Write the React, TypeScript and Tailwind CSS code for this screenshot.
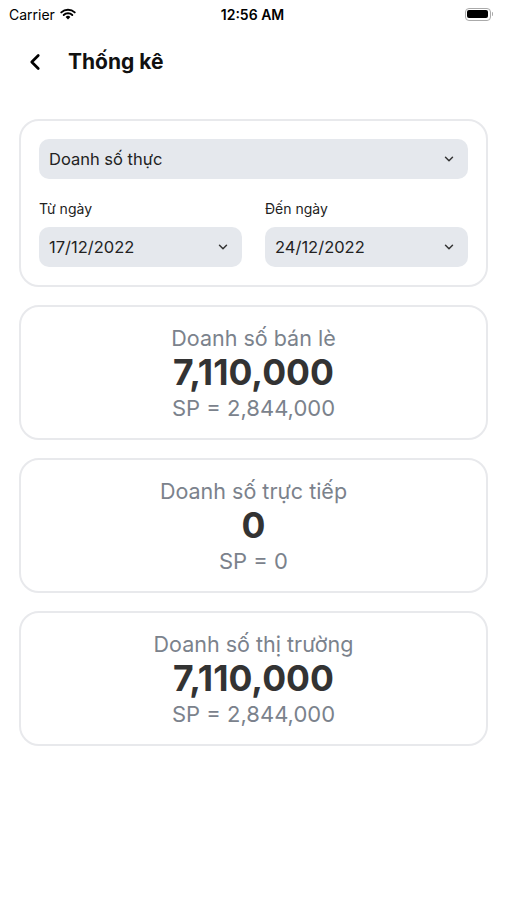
import { ChevronDown, ChevronLeft } from "lucide-react";

const stats = [
  { title: "Doanh số bán lè", value: "7,110,000", sp: "2,844,000" },
  { title: "Doanh số trực tiếp", value: "0", sp: "0" },
  { title: "Doanh số thị trường", value: "7,110,000", sp: "2,844,000" },
];

function Select({ value, className = "" }: { value: string; className?: string }) {
  return (
    <div className={`h-10 bg-[#e5e8ed] rounded-[10px] flex items-center pl-[10px] pr-3 ${className}`}>
      <span className="flex-1 text-[16.5px] text-[#222]">{value}</span>
      <ChevronDown size={14} strokeWidth={2.5} className="text-[#333]" />
    </div>
  );
}

function StatusBar() {
  return (
    <div className="h-[28px] px-[9px] flex items-center text-[14px] text-black">
      <div className="flex-1 flex items-center gap-[5px]">
        <span>Carrier</span>
        <svg width="16" height="12" viewBox="0 0 16 12">
          <path d="M8 11.5 L5.6 8.9 A3.4 3.4 0 0 1 10.4 8.9 Z" fill="#000" />
          <path d="M3.7 7 A6.2 6.2 0 0 1 12.3 7" stroke="#000" strokeWidth="1.9" fill="none" strokeLinecap="round" />
          <path d="M1.3 4.4 A9.6 9.6 0 0 1 14.7 4.4" stroke="#000" strokeWidth="1.9" fill="none" strokeLinecap="round" />
        </svg>
      </div>
      <span className="font-semibold pl-[3px]">12:56 AM</span>
      <div className="flex-1 flex justify-end items-center pr-[5px]">
        <div className="w-[26px] h-[13px] rounded-[4px] border border-[#aaa] p-[1.5px]">
          <div className="w-full h-full rounded-[2px] bg-black" />
        </div>
        <div className="w-[1.5px] h-[4px] bg-[#aaa] rounded-r ml-[1px]" />
      </div>
    </div>
  );
}

export default function App() {
  return (
    <div className="min-h-screen bg-white font-['Inter',sans-serif]">
      <StatusBar />

      {/* header */}
      <div className="h-[68px] flex items-center pl-[22px] gap-[20px]">
        <ChevronLeft size={26} strokeWidth={2.5} className="text-black" />
        <h1 className="text-[21px] font-bold text-[#111]">Thống kê</h1>
      </div>

      <div className="px-[19px] pt-[23px] flex flex-col gap-[18px]">
        {/* filter card */}
        <div className="border-2 border-[#e8e9ec] rounded-[20px] p-[18px] flex flex-col">
          <Select value="Doanh số thực" />
          <div className="flex gap-[23px] mt-[19px]">
            <div className="flex-1">
              <p className="text-[14px] text-[#222] mb-[8px]">Từ ngày</p>
              <Select value="17/12/2022" />
            </div>
            <div className="flex-1">
              <p className="text-[14px] text-[#222] mb-[8px]">Đến ngày</p>
              <Select value="24/12/2022" />
            </div>
          </div>
        </div>

        {/* stat cards */}
        {stats.map((s) => (
          <div
            key={s.title}
            className="h-[135px] border-2 border-[#e8e9ec] rounded-[20px] flex flex-col items-center justify-center"
          >
            <p className="text-[21.5px] leading-[28px] text-[#7b828c]">{s.title}</p>
            <p className="text-[35.5px] leading-[42px] font-bold text-[#333]">{s.value}</p>
            <p className="text-[22px] leading-[28px] text-[#7b828c]">SP = {s.sp}</p>
          </div>
        ))}
      </div>
    </div>
  );
}
